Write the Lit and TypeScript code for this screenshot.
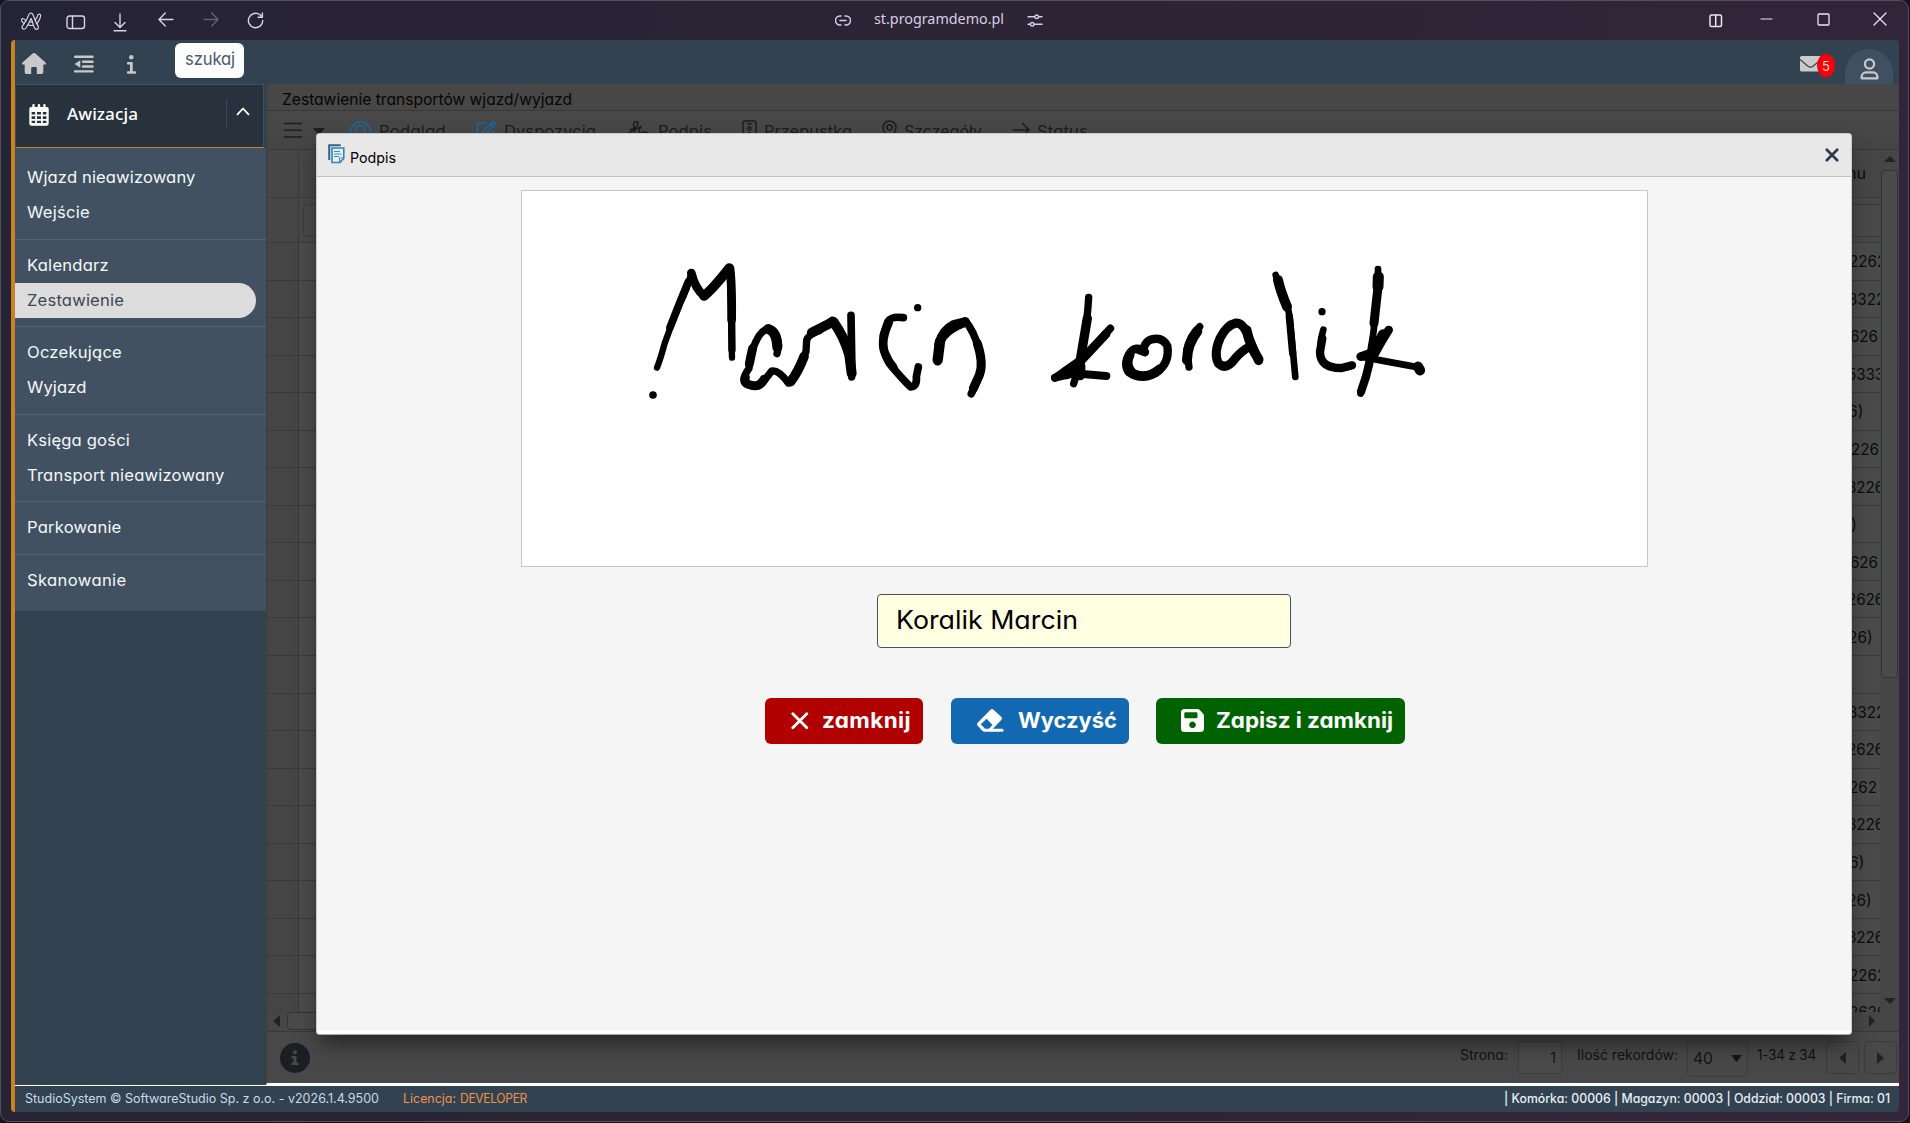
import { LitElement, html, css, svg, nothing, type TemplateResult } from "lit";
import { customElement, property } from "lit/decorators.js";
import { styleMap } from "lit/directives/style-map.js";

/** One line of text, widened and tracked so that it fills the given width. */
@customElement("fit-text")
class FitText extends LitElement {
  @property() text = "";
  @property({ type: Number }) w = 0;

  static styles = css`
    :host { display: inline-block; white-space: pre; flex: none; }
    span { display: inline-block; transform-origin: 0 50%; }
  `;

  updated() {
    const span = this.renderRoot.querySelector("span")!;
    span.style.letterSpacing = "0px";
    span.style.transform = "none";
    const natural = span.getBoundingClientRect().width;
    const stretch = Math.max(0.95, Math.min(1.07, this.w / natural));
    span.style.letterSpacing = `${(this.w / stretch - natural) / this.text.length}px`;
    span.style.transform = `scaleX(${stretch})`;
    this.style.width = `${this.w}px`;
  }

  render() {
    return html`<span>${this.text}</span>`;
  }
}

const fit = (text: string, w: number) => html`<fit-text .text=${text} .w=${w}></fit-text>`;

const line = (w: number, h: number, body: TemplateResult, sw = 1.5) => html`
  <svg width=${w} height=${h} viewBox="0 0 ${w} ${h}" fill="none" stroke="currentColor"
    stroke-width=${sw} stroke-linecap="round" stroke-linejoin="round">${body}</svg>`;

const solid = (w: number, h: number, body: TemplateResult, box = `0 0 ${w} ${h}`) => html`
  <svg width=${w} height=${h} viewBox=${box} fill="currentColor" preserveAspectRatio="none">${body}</svg>`;

const icons = {
  arc: line(22, 19, svg`<path d="M10 1.300C8.700 1.800 8.200 4 7.500 6L2.200 14.500c-1 2.500 2.300 3.700 3.800 1.500l2-3.300c1.800.8 3.600 1 5.200.6l1.600 3c1.300 1.900 4.100.8 3.500-1.500l-1.200-3.300c2-2.500 3.300-5 3.600-7.700.1-2.100-2.500-2.400-3-.5-.5 2-1.200 3.400-2.500 4.700L13 2.800c-.7-1.600-1.800-1.900-3-1.500z"/><path d="M6 9C4.800 7.800 3.700 6 2.300 6.600.6 7.600 2 10.300 4.200 11.600M11 6.500l-1.500 3.200q1.500.6 3 .1zM8 12.700 9.500 9.700M13.200 13.300l-.7-3.500M15.200 8l1.500 4"/>`, 1.2),
  panel: line(20, 15, svg`<rect x="1" y="1" width="17.500" height="12.500" rx="2.500"/><path d="M6.500 1v12.500"/>`, 1.4),
  download: line(14, 19, svg`<path d="M7 1v13M2 9.500l5 5 5-5M1 17.800h12"/>`, 1.4),
  back: line(16, 15, svg`<path d="M15 7.500H1M7.300 1 1 7.500 7.300 14"/>`, 1.4),
  forward: line(16, 15, svg`<path d="M1 7.500h14M8.700 1 15 7.500 8.700 14"/>`, 1.4),
  reload: line(17, 17, svg`<path d="M15.800 8.500A7.200 7.200 0 1 1 13 2.800L15.300 5M15.400 1v4.200h-4.300"/>`, 1.4),
  link: line(16, 11, svg`<path d="M6 1H5a4.400 4.400 0 0 0 0 9h1M10 1h1a4.400 4.400 0 0 1 0 9h-1M5 5.500h6"/>`, 1.5),
  sliders: line(16, 13, svg`<path d="M1 2.800h6.500M12 2.800h3M1 10.300h2M7.500 10.300H15"/><circle cx="9.700" cy="2.800" r="1.800"/><circle cx="5.200" cy="10.300" r="1.800"/>`, 1.4),
  split: line(14, 14, svg`<rect x="1" y="1" width="11.500" height="11.500" rx="1.500"/><path d="M6.700 1v11.500"/>`, 1.5),
  minimize: line(13, 14, svg`<path d="M1 7h11"/>`, 1.2),
  maximize: line(13, 13, svg`<rect x="1" y="1" width="11" height="11" rx="1"/>`, 1.3),
  close: line(14, 14, svg`<path d="M1 1l12 12M13 1 1 13"/>`, 1.3),
  home: solid(24, 21, svg`<path d="M12 0c.5 0 1 .2 1.400.5L23.500 9.600c.9.900.5 2-.6 2h-1.600v7.500c0 1.200-.7 1.900-1.800 1.900h-4.700v-5.800c0-.8-.5-1.200-1.200-1.200h-3.200c-.7 0-1.200.4-1.200 1.200V21H4.500c-1.100 0-1.800-.7-1.800-1.900v-7.500H1.100c-1.100 0-1.500-1.100-.6-2L10.600.5C11 .2 11.500 0 12 0z"/>`),
  outdent: solid(20, 18, svg`<path d="M1 .5h17.500a1 1 0 0 1 0 2.400H1a1 1 0 0 1 0-2.400zM9 5.500h9.500a1 1 0 0 1 0 2.400H9a1 1 0 0 1 0-2.400zM9 10.300h9.500a1 1 0 0 1 0 2.400H9a1 1 0 0 1 0-2.400zM1 15.200h17.500a1 1 0 0 1 0 2.400H1a1 1 0 0 1 0-2.400zM6.300 5.300v7.500L.5 9z"/>`),
  info: solid(9, 19, svg`<circle cx="4.300" cy="2.300" r="2.200"/><path d="M1 7h4.700v9.200H8a1.200 1.200 0 0 1 0 2.500H1a1.200 1.200 0 0 1 0-2.500h2V9.400H1A1.200 1.200 0 0 1 1 7z"/>`),
  envelope: html`<svg width="21" height="16" viewBox="0 0 21 16"><rect width="21" height="15.500" rx="1.500" fill="#cbcbcb"/><path d="M0 3.500 8 10.200q2.500 1.700 5 0L21 3.500" fill="none" stroke="#324250" stroke-width="1.200"/></svg>`,
  user: line(19, 22, svg`<circle cx="9.500" cy="6" r="4.600"/><path d="M1.600 20.300v-1.300c0-3 2.400-4.600 5-4.600h5.800c2.600 0 5 1.600 5 4.600v1.300z"/>`, 2.3),
  calendar: html`<svg width="20" height="22" viewBox="0 0 20 22" fill="#fff"><path d="M3.300 1.200a1.200 1.200 0 0 1 2.400 0V3h3V1.200a1.200 1.200 0 0 1 2.500 0V3h3V1.200a1.200 1.200 0 0 1 2.400 0V3H18a1.700 1.700 0 0 1 1.700 1.700v14.800A2.200 2.200 0 0 1 17.500 21.700h-15A2.200 2.200 0 0 1 .3 19.500V4.700A1.700 1.700 0 0 1 2 3h1.300z"/><g fill="#28323d"><path d="M2.600 8h3.600v2.500H2.600zM8 8h4v2.500H8zM13.800 8h3.600v2.500h-3.600zM2.600 12.300h3.600v2.600H2.600zM8 12.300h4v2.600H8zM13.800 12.300h3.600v2.600h-3.600zM2.600 16.700h3.600v2.300H2.600zM8 16.700h4v2.300H8zM13.800 16.700h3.600v2.300h-3.600z"/></g></svg>`,
  chevron: line(14, 9, svg`<path d="M1.500 7.300 7 1.500l5.500 5.800"/>`, 1.8),
  menu: line(20, 16, svg`<path d="M1.500 1.500h17M1.500 8.300h17M1.500 15h17"/>`, 1.4),
  eye: line(23, 18, svg`<path d="M1 9q4-8 10.500-8T22 9q-4 8-10.500 8T1 9z"/><circle cx="11.500" cy="9" r="4.500"/>`),
  edit: line(21, 20, svg`<path d="M10 3H3.500Q1.500 3 1.500 5v12q0 2 2 2h12q2 0 2-2v-6M17 1.300l2.700 2.400L10 14l-4 1.300L7.200 11.300zM14.700 4l2.600 2.400"/>`, 1.6),
  sign: line(25, 20, svg`<path d="M4.500 9.500c3.500-.5 7.500-3 7.500-6 0-2.300-4-2.500-4.500.5-.4 4 3.500 6 .5 9.500-2 2.300-5 1.500-4.500-.5.8-2.500 7-3.500 11.500-6.500-2 3-3 6.500-1 6.500 1.500 0 2.500-1.200 3.500-1.200s1.500 1 4.500.7" />`, 1.5),
  badge: line(15, 20, svg`<rect x="1" y="1" width="13" height="18" rx="2"/><circle cx="7.500" cy="8.500" r="1.600"/><path d="M5.500 3.800h4M4.500 14.500q3-3.500 6 0"/>`, 1.5),
  pin: line(15, 20, svg`<path d="M7.500 19Q1 12 1 7.500a6.500 6.500 0 0 1 13 0Q14 12 7.500 19z"/><circle cx="7.500" cy="7.300" r="2.600"/>`, 1.5),
  arrow: line(18, 18, svg`<path d="M1 9h16M10.500 2.500 17 9l-6.500 6.500"/>`, 1.5),
  note: html`<svg width="17" height="20" viewBox="0 0 17 20" fill="none"><path d="M1.200 16V1.200h11.500" stroke="#2f6390" stroke-width="2"/><path d="M4 4h11.800v10.500l-3.800 4H4z" fill="#e2f0fa" stroke="#3f7fae" stroke-width="1.600"/><path d="M6 7.500h6M6 10h7.500M6 12.500h5" stroke="#3f8cc4" stroke-width="1.200"/><path d="M11.500 18v-4h4z" fill="#fff" stroke="#3f7fae"/></svg>`,
  cross: line(14, 14, svg`<path d="M1.800 1.800l10.400 10.400M12.200 1.800 1.800 12.200"/>`, 2.7),
  crossBig: line(18, 18, svg`<path d="M1.800 1.800l14 14M15.800 1.800l-14 14"/>`, 2.8),
  eraser: html`<svg width="27" height="23" viewBox="0 0 27 23"><path fill="#fff" fill-rule="evenodd" d="M13.200.9q1.800-1.600 3.600 0l7.400 6.900q1.500 1.600 0 3.300l-8.300 8.700h9.200a1.500 1.500 0 0 1 0 3H7.600q-1.200 0-2-.8L.9 17q-1.600-1.800 0-3.500zM9.600 9.700 3.700 15.200l4.400 4.600h3.700l3.700-3.900z"/></svg>`,
  save: html`<svg width="23" height="23" viewBox="0 0 23 23"><path fill="#fff" fill-rule="evenodd" d="M3.500 0h13.200q1 0 1.800.8L22.200 4.800q.8.800.8 1.800v13a3.400 3.400 0 0 1-3.400 3.400H3.500A3.400 3.400 0 0 1 0 19.600V3.500A3.500 3.500 0 0 1 3.500 0zM3.300 4.500V8q0 1.200 1.200 1.200h10.800q1.200 0 1.200-1.200V4.500q0-1.200-1.200-1.200H4.500q-1.200 0-1.200 1.200zM11.500 12.500a3.300 3.300 0 1 0 .01 0z"/></svg>`,
  infoDisc: html`<svg width="30" height="30" viewBox="0 0 30 30"><circle cx="15" cy="15" r="15" fill="#1b1e22"/><g fill="#484848"><circle cx="15" cy="9.200" r="2"/><path d="M11.500 13h5v6.500h2.200v2.500h-7.200v-2.500h2v-4h-2z"/></g></svg>`,
};

const tri = (dir: "up" | "down" | "left" | "right", long = 12, short = 6) => {
  const vertical = dir === "up" || dir === "down";
  const w = vertical ? long : short;
  const h = vertical ? short : long;
  const points = {
    up: `0,${h} ${w},${h} ${w / 2},0`,
    down: `0,0 ${w},0 ${w / 2},${h}`,
    left: `${w},0 ${w},${h} 0,${h / 2}`,
    right: `0,0 0,${h} ${w},${h / 2}`,
  }[dir];
  return solid(w, h, svg`<polygon points=${points}/>`);
};

type Item = [label: string, width: number];
const MENU: Item[][] = [
  [["Wjazd nieawizowany", 168.5], ["Wejście", 63]],
  [["Kalendarz", 82], ["Zestawienie", 97]],
  [["Oczekujące", 95], ["Wyjazd", 59.5]],
  [["Księga gości", 103], ["Transport nieawizowany", 197.5]],
  [["Parkowanie", 94.5]],
  [["Skanowanie", 99.5]],
];

const TOOLS: [TemplateResult, string, number, boolean][] = [
  [icons.eye, "Podgląd", 67, true],
  [icons.edit, "Dyspozycja", 92, true],
  [icons.sign, "Podpis", 54, false],
  [icons.badge, "Przepustka", 88, false],
  [icons.pin, "Szczegóły", 78, false],
  [icons.arrow, "Status", 51, false],
];

/** Visible tail of the last column, with the offset at which it starts. */
const ROWS: [string, number][] = [
  ["2262", 2], ["3322", 1], ["626", 3], ["5333", 0], ["6)", 1], ["226", 4], ["3226", 0],
  [")", 4], ["626", 3], ["2626", 0], ["26)", 1], ["", 0], ["3322", 1], ["2626", 0],
  ["262", 2], ["3226", 0], ["6)", 2], ["26)", 0], ["3226", 0], ["2262", 2], ["2626", 2],
];

const FIRST_NAME: [string, number][] = [
  ["M111 383 Q122 355 134 310 Q155 250 180 190 Q202 150 214 97", 19],
  ["M150 262 Q178 190 205 125", 23],
  ["M214 99 Q225 145 252 168", 26],
  ["M252 168 Q280 145 328 84", 29],
  ["M329 84 L336 353", 19],
  ["M330 86 Q336 130 335 240", 26],
  ["M335 240 L336 330", 22],
  ["M471 341 L476 315 Q472 268 445 267 Q420 268 398 328 Q390 350 387 385 Q362 420 378 432 Q412 446 428 428 L455 393 Q475 388 505 429 Q525 410 558 335 L560 300 Q565 285 598 272 L636 241 Q672 275 684 340 Q690 370 695 411", 22],
  ["M445 267 Q470 275 472 322", 30],
  ["M398 325 Q392 350 388 372", 27],
  ["M376 412 Q370 432 400 437 Q420 440 432 418", 27],
  ["M512 425 Q535 395 552 350", 29],
  ["M575 278 L640 245", 29],
  ["M642 248 Q672 290 688 345 L695 400", 30],
  ["M693 226 L696 400", 23],
  ["M850 233 Q815 228 804 244 L790 285 Q784 330 808 370 Q842 412 872 441 Q892 440 889 410 L895 381", 23],
  ["M806 248 Q780 305 795 340 Q805 365 820 382", 26],
  ["M953 365 L955 310 Q965 270 1000 252 L1036 243 Q1060 270 1078 330 Q1088 375 1078 410 L1054 461", 23],
  ["M953 360 L960 305", 31],
  ["M960 305 Q975 268 1036 246", 28],
  ["M1072 310 Q1092 370 1078 405 L1060 445", 27],
];
const SURNAME: [string, number][] = [
  ["M176 172 Q172 240 165 270 L150 370 L131 431", 22],
  ["M172 235 L150 365", 28],
  ["M241 265 L165 350 L75 414", 23],
  ["M228 282 L150 365 L105 395", 27],
  ["M75 413 L130 400 L229 408", 24],
  ["M110 402 L150 378 L150 405", 32],
  ["M345 336 Q318 314 299 340 Q280 372 296 396 Q330 420 378 398 Q420 370 412 318 Q398 290 365 298 Q348 303 342 322", 25],
  ["M325 330 L344 337", 24],
  ["M299 345 Q282 380 310 402 Q350 420 388 388", 29],
  ["M509 260 Q480 285 470 330 L477 381", 22],
  ["M502 274 Q472 312 471 360", 30],
  ["M686 362 L655 290 Q640 248 618 249 Q590 255 570 295 Q550 340 565 370 Q585 388 605 368 Q635 330 660 320", 27],
  ["M650 270 Q660 320 686 358", 29],
  ["M737 105 L748 140 Q775 190 780 240 L796 411", 20],
  ["M744 120 Q752 155 771 200", 30],
  ["M778 230 L788 340", 22],
  ["M880 269 Q866 315 873 352 Q880 385 930 385 Q955 385 967 375", 20],
  ["M877 295 L870 335 Q870 385 935 384 L966 376", 25],
  ["M1044 87 L1044 150 L1030 280 L1012 390 L992 461", 20],
  ["M1045 110 L1044 140", 33],
  ["M1043 150 L1032 250", 27],
  ["M1018 370 L1008 410 L993 455", 25],
  ["M1076 270 L1035 335 L992 350", 26],
  ["M1060 285 L1025 350", 34],
  ["M992 350 L1100 370 L1166 382", 21],
  ["M1164 380 L1170 391", 31],
];

@customElement("app-root")
class AppRoot extends LitElement {
  static styles = css`
    :host {
      display: block; position: relative; width: 1910px; height: 1123px; overflow: hidden;
      background: #17151a; color: #fff;
      font: 15.500px/20px Inter, "Liberation Sans", sans-serif;
      font-feature-settings: "cv11";
    }
    * { box-sizing: border-box; }
    svg { display: block; flex: none; }
    .window {
      width: 1909px; height: 1122px; display: flex; flex-direction: column;
      border: 1px solid #54505a; border-radius: 9px; overflow: hidden;
      background: linear-gradient(100deg, #252336 0%, #2b2434 45%, #34253a 100%);
    }
    .chrome { height: 39px; flex: none; display: grid; grid-template-columns: 1fr auto 1fr; align-items: start; color: #d9d3ea; }
    .nav { display: flex; align-items: center; padding: 10px 0 0 19px; height: 30px; }
    .nav svg:nth-child(2) { margin: 2px 0 0 24px; }
    .nav svg:nth-child(3) { margin: 3px 0 0 27px; }
    .nav svg:nth-child(4) { margin: -3px 0 0 31px; }
    .nav svg:nth-child(5) { margin: -3px 0 0 29px; opacity: .35; }
    .nav svg:nth-child(6) { margin: -2px 0 0 28px; }
    .address { display: flex; align-items: center; height: 38px; font: 15px/20px "Noto Sans", sans-serif; color: #d6cfe6; padding-right: 32px; }
    .address fit-text { margin: -4px 23px 0; }
    .controls { display: flex; justify-content: flex-end; align-items: center; height: 38px; padding: 0 21px 2px 0; color: #ece6f2; }
    .controls svg:nth-child(1) { margin: 3px 37px 0 0; }
    .controls svg:nth-child(2) { margin-right: 44px; }
    .controls svg:nth-child(3) { margin-right: 43px; }

    .app {
      width: 1888px; height: 1072px; margin-left: 10px; flex: none; border-left: 4px solid #cb8322; border-radius: 4px; overflow: hidden;
      display: grid; grid-template-rows: 44px 1001px 27px;
    }
    .topbar { background: #324250; display: flex; align-items: center; color: #c9c9c9; }
    .topbar .home { margin-left: 7px; margin-top: 3px; }
    .topbar .outdent { margin-left: 28px; margin-top: 3px; }
    .topbar .info { margin-left: 33px; margin-top: 5px; }
    .search { margin: -3px 0 0 39px; width: 69px; height: 35px; border-radius: 6px; background: #fcfdfd; color: #4c5b6b; display: flex; justify-content: center; align-items: center; font-size: 17.500px; padding-bottom: 3px; }
    .mail { margin-left: auto; display: flex; margin-top: 8px; }
    .mail svg { margin-top: 1px; }
    .count { width: 18px; height: 23px; margin: -1px 0 0 -4px; border-radius: 50%; background: #fb0007; color: #f4dada; font-size: 13px; line-height: 24px; text-align: center; }
    .avatar { width: 48px; height: 35px; margin: 9px 6px 0 10px; border-radius: 24px 24px 0 0 / 24px 24px 0 0; background: #405060; display: flex; justify-content: center; align-items: flex-start; padding: 9px 0 0; color: #c6c9cc; align-self: flex-start; }

    .body { display: grid; grid-template-columns: 251px 1fr; min-height: 0; }
    .side { background: #324250; display: flex; flex-direction: column; }
    .section { height: 64px; width: 249px; border: 1px solid #3d5364; border-left-color: #36495a; border-bottom: 1px solid #c4841f; background: #28323d; display: flex; align-items: center; font: 500 16px/20px "Noto Sans", sans-serif; padding: 0 0 3px 13px; }
    .section .name { margin: -2px 0 0 18px; }
    .section .chev { margin-left: auto; height: 29px; border-left: 1px solid #3b4a58; padding: 7px 13px 0 9px; margin-top: 0; }
    .menu { background: #415161; height: 463px; padding-top: 4px; }
    .group { padding: 8.500px 0 8px; border-bottom: 1px solid #526475; }
    .group:last-child { border: 0; }
    .entry { height: 35px; width: 241px; padding-left: 12px; display: flex; align-items: center; color: #f6f8fa; }
    .entry.active { background: #dcdcdc; color: #3c4650; border-radius: 0 18px 18px 0; }

    .main { background: #484848; color: #0b0b0b; display: flex; flex-direction: column; border-left: 1px solid #3d3d3d; border-bottom: 2px solid #fff; min-width: 0; }
    .caption { height: 27px; flex: none; border-bottom: 1px solid #383838; padding: 6px 0 0 15px; color: #060606; background: #474747; }
    .tools { height: 39px; flex: none; border-bottom: 1px solid #383838; display: flex; align-items: center; padding: 3px 0 0 16px; color: #1e1e1e; background: linear-gradient(#494949, #444); }
    .tools > svg { margin-top: -4px; }
    .tools .drop { margin: 0 24px 0 10px; }
    .tool { display: flex; align-items: center; gap: 7px; margin-right: 30px; color: #1c1c1c; }
    .tool .icon { margin-top: -3px; }
    .tool .blue { color: #1c679f; }
    .table { height: 862px; flex: none; display: grid; grid-template-columns: 1fr 19px; overflow: hidden; }
    .rows { overflow: hidden; }
    .row { height: 37.550px; display: grid; grid-template-columns: 32px 1fr 33px; border-bottom: 1px solid #3a3a3a; font-size: 16px; }
    .row > * { overflow: hidden; white-space: nowrap; display: flex; align-items: center; }
    .row .mark { background: #454545; border-right: 1px solid #3a3a3a; }
    .row .rest, .row .tail { background: #4b4b4b; }
    .row.head { height: 48px; }
    .row.filter { height: 45px; }
    .row.head > *, .row.filter > * { background: #464646; }
    .row.head .tail { padding-bottom: 1px; }
    .row.filter .box { height: 33px; margin-top: 6px; border: 1px solid #3a3a3a; background: #494949; }
    .row.filter .rest { margin-left: 4px; border-radius: 4px 0 0 4px; }
    .row.filter .tail { border-left: 0; border-right: 0; }
    .vbar { display: flex; flex-direction: column; align-items: center; padding: 6px 0 8px; color: #222; background: #464646; }
    .vbar .thumb { width: 17px; height: 508px; margin: 8px 0 auto; border: 1px solid #333; border-radius: 4px; background: #4a4c4b; }
    .hbar { height: 20px; flex: none; display: flex; align-items: center; color: #222; border-bottom: 1px solid #383838; padding: 0 24px 1px 6px; background: #464646; justify-content: space-between; }
    .hbar .thumb { width: 1400px; height: 18px; border: 1px solid #333; border-radius: 4px; background: #4a4a4a; margin: 0 auto 0 7px; }
    .pager { flex: 1; display: flex; padding: 9px 2px 0 13px; align-items: flex-start; font-size: 14px; color: #111; }
    .pager .disc { margin-top: 2px; margin-right: auto; }
    .pager .label { padding-top: 4px; display: flex; }
    .pager .field { border: 1px solid #3c3c3c; border-radius: 4px; height: 33px; display: flex; align-items: center; color: #151515; }
    .pager .page { width: 44px; margin: 0 15px 0 10px; justify-content: flex-end; padding-right: 5px; background: #4b4b4b; }
    .pager .size { width: 61px; height: 36px; margin: 0 9px 0 9px; padding: 0 5px 2px; justify-content: space-between; font-size: 16px; }
    .pager .step { width: 33px; margin-left: 5px; justify-content: center; color: #222; }
    .pager .step.first { margin-left: 10px; }

    .footer { background: #324250; border-top: 1px solid #fff; display: flex; align-items: center; padding: 0 9px 0 10px; font-size: 12.700px; color: #c9d9ec; }
    .footer .licence { margin-left: 24px; color: #f09347; display: flex; gap: 4px; }
    .footer .unit { margin-left: auto; color: #e8eef4; font-weight: 500; }

    .modal {
      position: absolute; left: 316px; top: 133px; width: 1536px; height: 902px; border-radius: 4px; overflow: hidden;
      background: #f5f5f5; border: 1px solid #c9c9c9; border-bottom-color: #aaa; color: #000;
      box-shadow: 0 12px 20px -4px rgba(0, 0, 0, .5); display: flex; flex-direction: column; align-items: center;
    }
    .modal::after { content: ""; width: 100%; height: 4px; background: #fff; margin-top: auto; }
    .bar { width: 100%; height: 43px; flex: none; background: #e8e8e8; border-bottom: 1px solid #c2c2c2; display: flex; padding: 10px 12px 0 11px; }
    .bar .name { margin: 4px auto 0 5px; font-size: 14.500px; }
    .bar .x { color: #2c3d4d; margin-top: 4px; }
    .pad { width: 1127px; height: 377px; flex: none; margin: 13px 0 0 1px; border: 1px solid #c8c8c8; background: #fff; }
    .signer { width: 414px; height: 54px; flex: none; margin-top: 27px; border: 1px solid #44525f; border-radius: 4px; background: #ffffe1; display: flex; align-items: center; padding: 0 0 2px 18px; font-size: 25px; line-height: 32px; }
    .actions { display: flex; gap: 27px; margin: 50px 0 0 2px; }
    .action { height: 46px; border-radius: 6px; display: flex; align-items: center; color: #fff; font-size: 21px; font-weight: 700; line-height: 28px; padding-bottom: 1px; }
    .red { background: #b00000; width: 158px; padding-left: 26px; gap: 13px; }
    .sky { background: #1269b1; width: 178px; padding-left: 26px; gap: 14px; margin-left: 1px; }
    .green { background: #006200; width: 249px; padding-left: 25px; gap: 12px; }
  `;

  private chrome() {
    return html`<div class="chrome">
      <div class="nav">${icons.arc}${icons.panel}${icons.download}${icons.back}${icons.forward}${icons.reload}</div>
      <div class="address">${icons.link}${fit("st.programdemo.pl", 130)}${icons.sliders}</div>
      <div class="controls">${icons.split}${icons.minimize}${icons.maximize}${icons.close}</div>
    </div>`;
  }

  private topbar() {
    return html`<div class="topbar">
      <span class="home">${icons.home}</span>
      <span class="outdent">${icons.outdent}</span>
      <span class="info">${icons.info}</span>
      <div class="search">${fit("szukaj", 50)}</div>
      <div class="mail">${icons.envelope}<span class="count">5</span></div>
      <div class="avatar">${icons.user}</div>
    </div>`;
  }

  private sidebar() {
    return html`<nav class="side">
      <div class="section">${icons.calendar}<span class="name">${fit("Awizacja", 71)}</span><span class="chev">${icons.chevron}</span></div>
      <div class="menu">
        ${MENU.map((group) => html`<div class="group">
          ${group.map(([label, w]) => html`<div class="entry ${label === "Zestawienie" ? "active" : ""}">${fit(label, w)}</div>`)}
        </div>`)}
      </div>
    </nav>`;
  }

  private table() {
    return html`<div class="table">
      <div class="rows">
        <div class="row head"><div class="mark"></div><div class="rest"></div><div class="tail">${fit("nu", 19)}</div></div>
        <div class="row filter"><div class="mark"></div><div class="rest box"></div><div class="tail box"></div></div>
        ${ROWS.map(([text, x]) => html`<div class="row">
          <div class="mark"></div><div class="rest"></div>
          <div class="tail" style=${styleMap({ paddingLeft: `${x}px` })}>${text ? fit(text, text.replace(")", "").length * 9.3 + (text.includes(")") ? 6 : 0)) : nothing}</div>
        </div>`)}
      </div>
      <div class="vbar">${tri("up")}<div class="thumb"></div>${tri("down")}</div>
    </div>`;
  }

  private pager() {
    return html`<div class="pager">
      <span class="disc">${icons.infoDisc}</span>
      <span class="label">${fit("Strona:", 48)}</span>
      <span class="field page">1</span>
      <span class="label">${fit("Ilość rekordów:", 101)}</span>
      <span class="field size">${fit("40", 20)}${tri("down", 11, 7)}</span>
      <span class="label">${fit("1-34 z 34", 59)}</span>
      <span class="field step first">${tri("left", 12, 7)}</span>
      <span class="field step">${tri("right", 12, 7)}</span>
    </div>`;
  }

  private modal() {
    const strokes = (list: [string, number][]) =>
      list.map(([d, w]) => svg`<path d=${d} stroke-width=${w}/>`);
    return html`<div class="modal">
      <div class="bar">${icons.note}<span class="name">${fit("Podpis", 46)}</span><span class="x">${icons.cross}</span></div>
      <div class="pad">
        <svg width="1125" height="375" viewBox="522 191 1125 375" fill="none" stroke="#000" stroke-linecap="round" stroke-linejoin="round">
          <g transform="translate(620 240) scale(.33333)">
            ${strokes(FIRST_NAME)}
            <circle cx="99" cy="465" r="11.500" fill="#000" stroke="none"/><circle cx="893" cy="203" r="11" fill="#000" stroke="none"/>
          </g>
          <g transform="translate(1030 240) scale(.33333)">
            ${strokes(SURNAME)}
            <circle cx="876" cy="215" r="11" fill="#000" stroke="none"/>
          </g>
        </svg>
      </div>
      <div class="signer">${fit("Koralik Marcin", 182)}</div>
      <div class="actions">
        <div class="action red">${icons.crossBig}${fit("zamknij", 89)}</div>
        <div class="action sky">${icons.eraser}${fit("Wyczyść", 99)}</div>
        <div class="action green">${icons.save}${fit("Zapisz i zamknij", 177)}</div>
      </div>
    </div>`;
  }

  render() {
    return html`
      <div class="window">
        ${this.chrome()}
        <div class="app">
          ${this.topbar()}
          <div class="body">
            ${this.sidebar()}
            <main class="main">
              <div class="caption">${fit("Zestawienie transportów wjazd/wyjazd", 290)}</div>
              <div class="tools">
                ${icons.menu}<span class="drop">${tri("down", 12, 7)}</span>
                ${TOOLS.map(([icon, label, w, blue]) => html`<span class="tool"><span class="icon ${blue ? "blue" : ""}">${icon}</span>${fit(label, w)}</span>`)}
              </div>
              ${this.table()}
              <div class="hbar">${tri("left", 12, 7)}<div class="thumb"></div>${tri("right", 12, 6)}</div>
              ${this.pager()}
            </main>
          </div>
          <div class="footer">
            ${fit("StudioSystem © SoftwareStudio Sp. z o.o. - v2026.1.4.9500", 354)}
            <span class="licence">${fit("Licencja:", 53)}${fit("DEVELOPER", 67)}</span>
            <span class="unit">${fit("| Komórka: 00006 | Magazyn: 00003 | Oddział: 00003 | Firma: 01", 386)}</span>
          </div>
        </div>
      </div>
      ${this.modal()}
    `;
  }
}
